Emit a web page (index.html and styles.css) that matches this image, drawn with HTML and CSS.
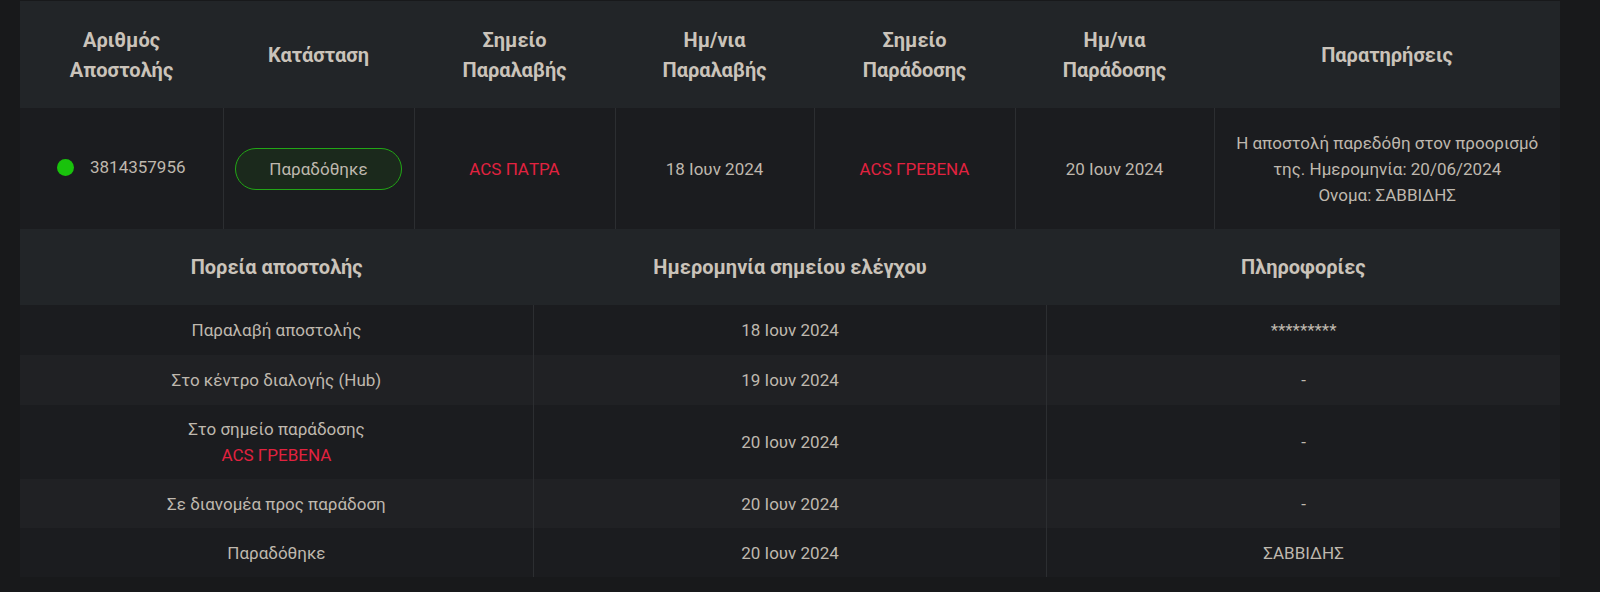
FILE: index.html
```html
<!DOCTYPE html>
<html lang="el">

<head>
    <meta charset="UTF-8">
    <meta name="viewport" content="width=device-width, initial-scale=1.0">
    <title>Αναζήτηση αποστολής</title>
    <link rel="stylesheet" href="styles.css">
</head>

<body>
    <div class="tracking">
        <table class="summary">
            <colgroup>
                <col style="width: 203px">
                <col style="width: 191px">
                <col style="width: 201px">
                <col style="width: 199px">
                <col style="width: 201px">
                <col style="width: 199px">
                <col>
            </colgroup>
            <thead>
                <tr>
                    <th>Αριθμός<br>Αποστολής</th>
                    <th>Κατάσταση</th>
                    <th>Σημείο<br>Παραλαβής</th>
                    <th>Ημ/νια<br>Παραλαβής</th>
                    <th>Σημείο<br>Παράδοσης</th>
                    <th>Ημ/νια<br>Παράδοσης</th>
                    <th>Παρατηρήσεις</th>
                </tr>
            </thead>
            <tbody>
                <tr>
                    <td>
                        <span class="voucher"><span class="dot"></span>3814357956</span>
                    </td>
                    <td><span class="badge">Παραδόθηκε</span></td>
                    <td class="station">ACS ΠΑΤΡΑ</td>
                    <td>18 Ιουν 2024</td>
                    <td class="station">ACS ΓΡΕΒΕΝΑ</td>
                    <td>20 Ιουν 2024</td>
                    <td>Η αποστολή παρεδόθη στον προορισμό<br>της. Ημερομηνία: 20/06/2024<br>Ονομα: ΣΑΒΒΙΔΗΣ</td>
                </tr>
            </tbody>
        </table>

        <table class="history">
            <thead>
                <tr>
                    <th>Πορεία αποστολής</th>
                    <th>Ημερομηνία σημείου ελέγχου</th>
                    <th>Πληροφορίες</th>
                </tr>
            </thead>
            <tbody>
                <tr>
                    <td>Παραλαβή αποστολής</td>
                    <td>18 Ιουν 2024</td>
                    <td>*********</td>
                </tr>
                <tr>
                    <td>Στο κέντρο διαλογής (Hub)</td>
                    <td>19 Ιουν 2024</td>
                    <td>-</td>
                </tr>
                <tr class="tall">
                    <td>Στο σημείο παράδοσης<br><span class="station">ACS ΓΡΕΒΕΝΑ</span></td>
                    <td>20 Ιουν 2024</td>
                    <td>-</td>
                </tr>
                <tr class="short">
                    <td>Σε διανομέα προς παράδοση</td>
                    <td>20 Ιουν 2024</td>
                    <td>-</td>
                </tr>
                <tr class="short">
                    <td>Παραδόθηκε</td>
                    <td>20 Ιουν 2024</td>
                    <td>ΣΑΒΒΙΔΗΣ</td>
                </tr>
            </tbody>
        </table>
    </div>
</body>

</html>
```

FILE: styles.css
```css
body {
    font-family: Roboto, "Noto Sans", sans-serif;
    background-color: #18191b;
    color: #bfb8ae;
    margin: 0;
    padding: 1px 40px 0 20px;
}

.tracking {
    width: 1540px;
}

table {
    width: 100%;
    border-collapse: collapse;
    table-layout: fixed;
}

th {
    background-color: #222528;
    color: #cac3ba;
    font-size: 20px;
    font-weight: 700;
    line-height: 30px;
    text-align: center;
}

td {
    font-size: 17px;
    line-height: 26px;
    text-align: center;
    vertical-align: middle;
}

.summary th {
    height: 107px;
    padding: 0 10px;
}

.summary td {
    background-color: #1b1c1f;
    height: 121px;
    padding: 0 10px;
    border-left: 1px solid #2c2e31;
}

.summary td:first-child {
    border-left: none;
}

.voucher {
    display: inline-flex;
    align-items: center;
    gap: 16px;
}

.dot {
    width: 17px;
    height: 17px;
    border-radius: 50%;
    background-color: #19c20c;
}

.badge {
    display: inline-block;
    width: 167px;
    height: 42px;
    line-height: 40px;
    box-sizing: border-box;
    border: 1px solid #22a616;
    border-radius: 21px;
    background-color: #1b291c;
    font-size: 17px;
}

.station {
    color: #e2223f;
}

.history th {
    height: 76px;
    padding: 0 10px;
}

.history td {
    height: 50px;
    padding: 0 10px;
    background-color: #1b1c1f;
    border-left: 1px solid #2c2e31;
}

.history td:first-child {
    border-left: none;
}

.history tr:nth-child(even) td {
    background-color: #202124;
}

.history tr.tall td {
    height: 74px;
}

.history tr.short td {
    height: 49px;
}
```
